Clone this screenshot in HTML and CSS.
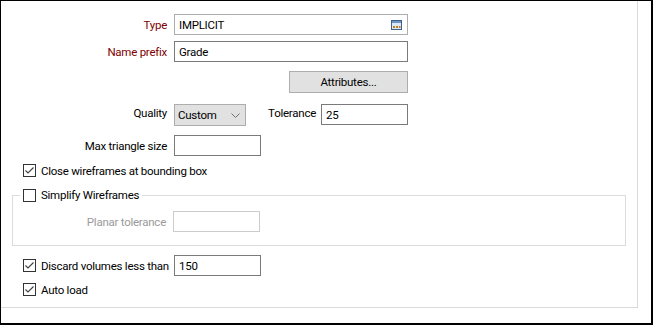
FILE: index.html
```html
<!DOCTYPE html>
<html>
<head>
<meta charset="utf-8">
<link rel="stylesheet" href="styles.css">
</head>
<body>
<div class="frame">
  <div class="panel">
    <div class="row r-type">
      <label class="lbl req">Type</label>
      <div class="field ro wide"><span class="val">IMPLICIT</span>
        <svg class="pick" width="11" height="10" viewBox="0 0 11 10">
          <rect x="0.5" y="0.5" width="10" height="9" fill="#dbe8f6" stroke="#3f5f8f"/>
          <rect x="1" y="1" width="9" height="2" fill="#6f93c4"/>
          <rect x="2" y="6" width="2" height="2" fill="#c8761f"/>
          <rect x="5" y="6" width="2" height="2" fill="#c8761f"/>
          <rect x="8" y="6" width="1.5" height="2" fill="#c8761f"/>
        </svg>
      </div>
    </div>
    <div class="row r-name">
      <label class="lbl req">Name prefix</label>
      <div class="field wide"><span class="val">Grade</span></div>
    </div>
    <div class="row r-attr">
      <div class="btn">Attributes...</div>
    </div>
    <div class="row r-qual">
      <label class="lbl hi">Quality</label>
      <div class="select"><span>Custom</span>
        <svg class="chev" width="9" height="5" viewBox="0 0 9 5"><polyline points="0.5,0.5 4.5,4.5 8.5,0.5" fill="none" stroke="#707070" stroke-width="1"/></svg>
      </div>
      <label class="lbl2 hi">Tolerance</label>
      <div class="field tol"><span class="val">25</span></div>
    </div>
    <div class="row r-max">
      <label class="lbl">Max triangle size</label>
      <div class="field small"></div>
    </div>
    <div class="row r-close cbrow">
      <svg class="cb" width="13" height="13" viewBox="0 0 13 13"><rect x="0.5" y="0.5" width="12" height="12" fill="#fff" stroke="#333"/><polyline points="2.5,6.5 5,9 10.5,3.5" fill="none" stroke="#444" stroke-width="1.2"/></svg>
      <span class="cbtext">Close wireframes at bounding box</span>
    </div>
    <fieldset class="group">
      <legend class="legend">
        <svg class="cb" width="13" height="13" viewBox="0 0 13 13"><rect x="0.5" y="0.5" width="12" height="12" fill="#fff" stroke="#333"/></svg>
        <span class="cbtext">Simplify Wireframes</span>
      </legend>
      <div class="row r-planar">
        <label class="lbl in dis">Planar tolerance</label>
        <div class="field small disfield"></div>
      </div>
    </fieldset>
    <div class="row r-discard cbrow">
      <div class="cbwrap">
        <svg class="cb" width="13" height="13" viewBox="0 0 13 13"><rect x="0.5" y="0.5" width="12" height="12" fill="#fff" stroke="#333"/><polyline points="2.5,6.5 5,9 10.5,3.5" fill="none" stroke="#444" stroke-width="1.2"/></svg>
        <span class="cbtext">Discard volumes less than</span>
      </div>
      <div class="field small"><span class="val">150</span></div>
    </div>
    <div class="row r-auto cbrow">
      <svg class="cb" width="13" height="13" viewBox="0 0 13 13"><rect x="0.5" y="0.5" width="12" height="12" fill="#fff" stroke="#333"/><polyline points="2.5,6.5 5,9 10.5,3.5" fill="none" stroke="#444" stroke-width="1.2"/></svg>
      <span class="cbtext">Auto load</span>
    </div>
  </div>
</div>
</body>
</html>
```

FILE: styles.css
```css
* { box-sizing: border-box; }
html, body { margin: 0; padding: 0; background: #fff; }
body {
  font-family: Roboto, "Noto Sans", sans-serif;
  font-size: 11.5px;
  letter-spacing: -0.25px;
  color: #000;
}
.frame {
  width: 653px;
  height: 325px;
  border-top: 1px solid #000;
  border-left: 1px solid #000;
  border-right: 2px solid #000;
  border-bottom: 2px solid #000;
  background: #fff;
}
.panel {
  width: 637px;
  height: 307px;
  border-right: 1px solid #dadada;
  border-bottom: 1px solid #dadada;
  padding-top: 13px;
}
.row {
  display: flex;
  align-items: center;
  height: 21px;
}
.lbl {
  width: 166px;
  text-align: right;
  margin-right: 7px;
  white-space: nowrap;
  line-height: 16px;
}
.lbl.in { width: 153px; }
.lbl.req { color: #800000; }
.lbl.dis { color: #9a9a9a; }
.hi { padding-bottom: 4px; }
.field {
  height: 21px;
  border: 1px solid #7a7a7a;
  background: #fff;
  display: flex;
  align-items: center;
  padding-left: 4px;
  line-height: 16px;
}
.field.ro { border-color: #adadad; }
.field.disfield { border-color: #cccccc; }
.wide { width: 234px; }
.small { width: 87px; }
.tol { width: 87px; }
.val { flex: 1; }
.pick { margin-right: 5px; }
.r-name { margin-top: 6px; }
.r-attr { margin-top: 9px; height: 22px; }
.btn {
  margin-left: 288px;
  width: 119px;
  height: 22px;
  background: #e1e1e1;
  border: 1px solid #adadad;
  display: flex;
  align-items: center;
  justify-content: center;
}
.r-qual { margin-top: 11px; height: 22px; }
.select {
  width: 72px;
  height: 22px;
  background: #e1e1e1;
  border: 1px solid #adadad;
  display: flex;
  align-items: center;
  justify-content: space-between;
  padding-left: 3px;
  padding-right: 5px;
}
.chev { display: block; }
.lbl2 {
  width: 75px;
  text-align: right;
  padding-right: 5px;
  white-space: nowrap;
}
.r-qual .tol { height: 21px; align-self: flex-start; }
.r-max { margin-top: 9px; }
.cbrow { padding-left: 22px; }
.cb { display: block; flex: none; }
.cbtext { margin-left: 5px; white-space: nowrap; line-height: 14px; }
.r-close { margin-top: 4px; }
.group {
  margin: 7px 0 0 11px;
  width: 614px;
  padding: 0 0 13px 0;
  border: 1px solid #dcdcdc;
  min-width: 0;
}
.legend {
  display: flex;
  align-items: center;
  height: 14px;
  margin-left: 7px;
  padding: 0 3px;
}
.r-planar { margin-top: 9px; }
.r-discard { margin-top: 9px; }
.cbwrap {
  width: 151px;
  display: flex;
  align-items: center;
}
.r-auto { margin-top: 3px; }
```
